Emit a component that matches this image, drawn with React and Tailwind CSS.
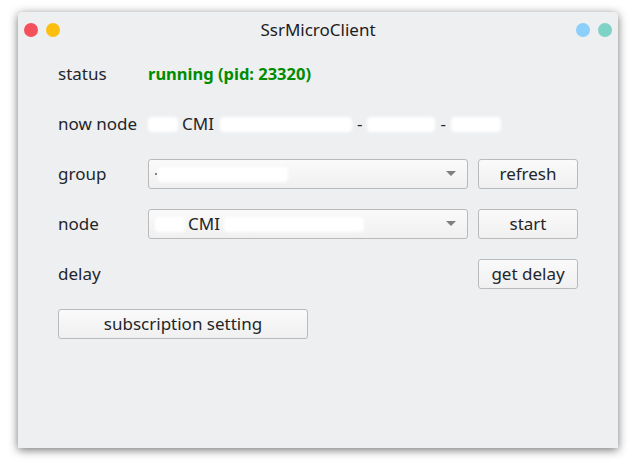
export default function App() {
  const blob = (w, extra = '') => (
    <span className={`inline-block h-[15px] bg-white rounded-[4px] blur-[1.5px] ${extra}`} style={{ width: w }} />
  );

  return (
    <div className="w-[636px] h-[466px] bg-white relative font-['Noto_Sans',sans-serif] text-[17px] text-[#232629]">
      <div className="absolute left-[18px] top-[12px] w-[600px] h-[436px] bg-[#eeeff1] rounded-t-[4px] shadow-[0_2px_10px_rgba(0,0,0,0.55)] flex flex-col">
        {/* title bar */}
        <div className="h-[34px] flex items-center px-[6px] pt-[1px]">
          <div className="flex gap-[8px]">
            <span className="w-[14px] h-[14px] rounded-full bg-[#f4505b]" />
            <span className="w-[14px] h-[14px] rounded-full bg-[#fdbf0f]" />
          </div>
          <div className="flex-1 text-center text-[17px] text-[#1c1c1c]">SsrMicroClient</div>
          <div className="flex gap-[8px]">
            <span className="w-[14px] h-[14px] rounded-full bg-[#8ccffb]" />
            <span className="w-[14px] h-[14px] rounded-full bg-[#7fd2c6]" />
          </div>
        </div>

        <div className="pl-[40px] pr-[40px] flex flex-col">
          <div className="h-[50px] flex items-center mt-[3px]">
            <span className="w-[90px]">status</span>
            <span className="font-bold text-[16.5px] text-[#008c00]">running (pid: 23320)</span>
          </div>

          <div className="h-[50px] flex items-center">
            <span className="w-[90px]">now node</span>
            <span className="flex items-center">
              {blob(30)}
              <span className="ml-[4px] mr-[6px]">CMI</span>
              {blob(132)}
              <span className="mx-[5px]">-</span>
              {blob(68)}
              <span className="mx-[5px]">-</span>
              {blob(50)}
            </span>
          </div>

          <div className="h-[50px] flex items-center">
            <span className="w-[90px]">group</span>
            <div className="w-[320px] h-[30px] border border-[#b8babc] rounded-[3px] bg-gradient-to-b from-[#fafafa] to-[#f0f0f0] flex items-center pl-[6px] pr-[10px]">
              <span className="flex-1 flex items-center">
                <span className="w-[2px] h-[2px] bg-[#777] mr-[1px]" />
                {blob(130)}
              </span>
              <svg width="12" height="6" viewBox="0 0 12 6"><path d="M1 0 L11 0 L6 5 Z" fill="#7d7f82" /></svg>
            </div>
            <button className="ml-[10px] w-[100px] h-[30px] border border-[#b8babc] rounded-[3px] bg-gradient-to-b from-[#fafafa] to-[#f0f0f0]">refresh</button>
          </div>

          <div className="h-[50px] flex items-center">
            <span className="w-[90px]">node</span>
            <div className="w-[320px] h-[30px] border border-[#b8babc] rounded-[3px] bg-gradient-to-b from-[#fafafa] to-[#f0f0f0] flex items-center pl-[6px] pr-[10px]">
              <span className="flex-1 flex items-center">
                {blob(30)}
                <span className="ml-[3px] mr-[4px]">CMI</span>
                {blob(140)}
              </span>
              <svg width="12" height="6" viewBox="0 0 12 6"><path d="M1 0 L11 0 L6 5 Z" fill="#7d7f82" /></svg>
            </div>
            <button className="ml-[10px] w-[100px] h-[30px] border border-[#b8babc] rounded-[3px] bg-gradient-to-b from-[#fafafa] to-[#f0f0f0]">start</button>
          </div>

          <div className="h-[50px] flex items-center">
            <span className="flex-1">delay</span>
            <button className="w-[100px] h-[30px] border border-[#b8babc] rounded-[3px] bg-gradient-to-b from-[#fafafa] to-[#f0f0f0]">get delay</button>
          </div>

          <div className="h-[50px] flex items-center">
            <button className="w-[250px] h-[30px] border border-[#b8babc] rounded-[3px] bg-gradient-to-b from-[#fafafa] to-[#f0f0f0]">subscription setting</button>
          </div>
        </div>
      </div>
    </div>
  );
}
